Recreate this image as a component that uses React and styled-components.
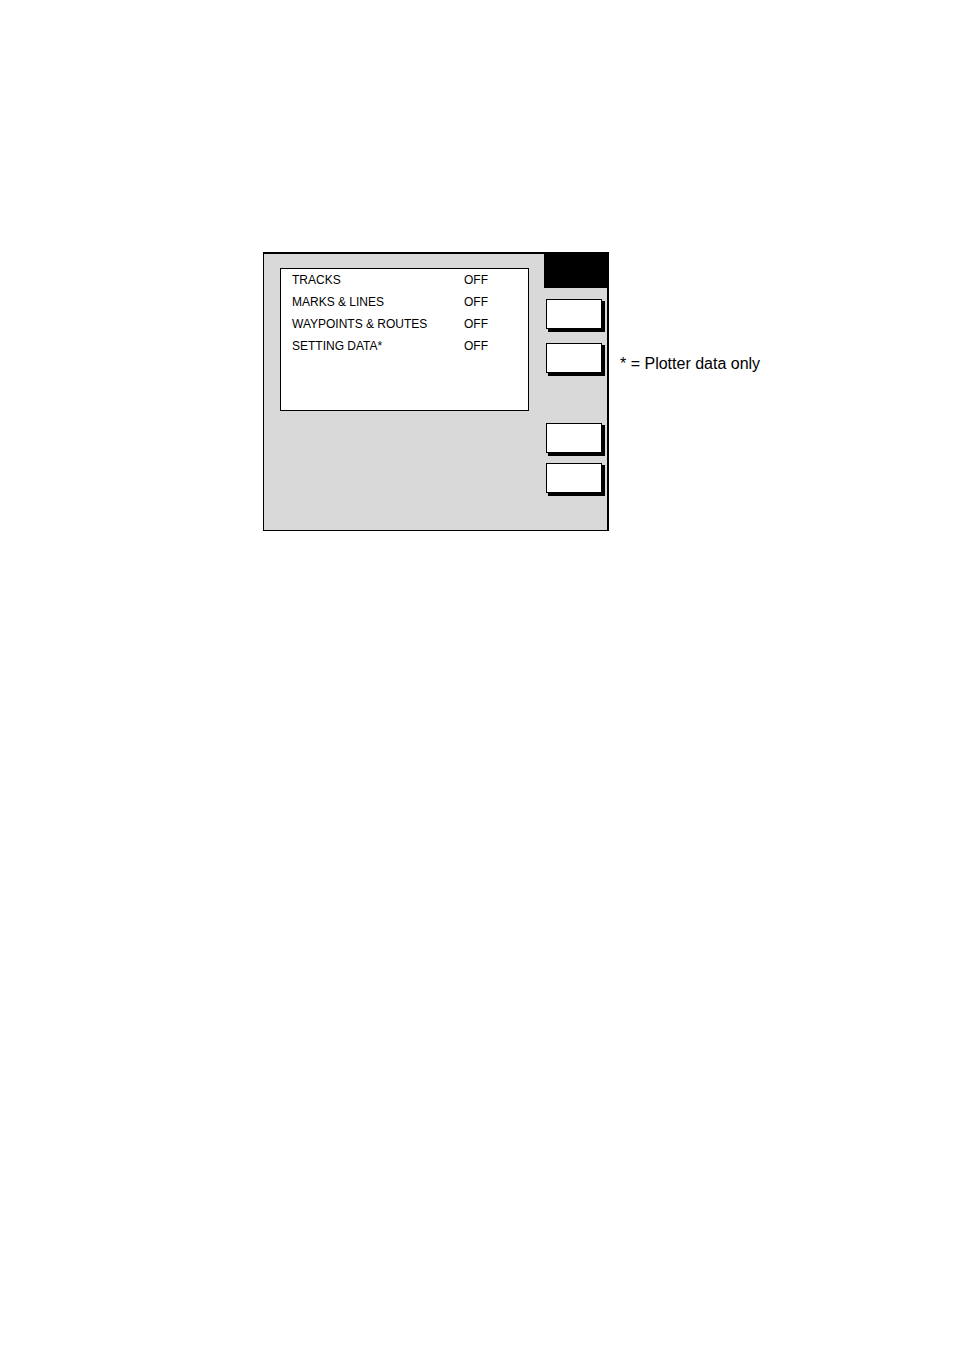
import React from "react";
import styled, { createGlobalStyle } from "styled-components";

const GlobalStyle = createGlobalStyle`
  *, *::before, *::after { box-sizing: border-box; }
  body {
    margin: 0;
    background: #fff;
    color: #000;
    font-family: "Liberation Sans", Arial, sans-serif;
  }
`;

const Page = styled.main`
  display: flex;
  align-items: flex-start;
  gap: 11px;
  min-height: 100vh;
  padding: 252px 24px 24px 263px;
`;

const Display = styled.section`
  display: flex;
  flex: 0 1 346px;
  justify-content: space-between;
  min-height: 279px;
  background: #d9d9d9;
  border: solid #000;
  border-width: 2px 2px 1px 1px;
`;

const Panel = styled.div`
  flex: 0 1 249px;
  align-self: flex-start;
  min-height: 143px;
  margin: 14px 0 0 16px;
  padding: 0 40px 0 11px;
  background: #fff;
  border: 1px solid #000;
`;

const Settings = styled.table`
  width: 100%;
  border-collapse: collapse;
  font-size: 12px;
  line-height: 22px;
  white-space: nowrap;
`;

const Name = styled.th`
  padding: 0;
  font-weight: normal;
  text-align: left;
`;

const Value = styled.td`
  padding: 0;
  text-align: right;
`;

const SoftKeys = styled.div`
  display: flex;
  flex: 0 0 63px;
  flex-direction: column;
`;

const Title = styled.div`
  height: 34px;
  background: #000;
`;

const KeyGroup = styled.div`
  display: flex;
  flex-direction: column;
  gap: ${({ $gap }) => $gap}px;
  padding: 0 5px 0 2px;
  margin-top: ${({ $top }) => $top}px;
`;

const SoftKey = styled.button`
  height: 30px;
  padding: 0;
  background: #fff;
  border: 1px solid #000;
  border-radius: 0;
  box-shadow: 3px 2px 0 #000, 2px 3px 0 #000, 3px 3px 0 #000;
`;

const Note = styled.p`
  margin: 102px 0 0;
  font-size: 16px;
  line-height: 20px;
  white-space: nowrap;
`;

const settings = [
  ["TRACKS", "OFF"],
  ["MARKS & LINES", "OFF"],
  ["WAYPOINTS & ROUTES", "OFF"],
  ["SETTING DATA*", "OFF"],
];

export default function App() {
  return (
    <>
      <GlobalStyle />
      <Page>
        <Display>
          <Panel>
            <Settings>
              <tbody>
                {settings.map(([name, value]) => (
                  <tr key={name}>
                    <Name scope="row">{name}</Name>
                    <Value>{value}</Value>
                  </tr>
                ))}
              </tbody>
            </Settings>
          </Panel>
          <SoftKeys>
            <Title />
            <KeyGroup $top={11} $gap={14}>
              <SoftKey type="button" aria-label="Soft key 1" />
              <SoftKey type="button" aria-label="Soft key 2" />
            </KeyGroup>
            <KeyGroup $top={50} $gap={10}>
              <SoftKey type="button" aria-label="Soft key 3" />
              <SoftKey type="button" aria-label="Soft key 4" />
            </KeyGroup>
          </SoftKeys>
        </Display>
        <Note>* = Plotter data only</Note>
      </Page>
    </>
  );
}
